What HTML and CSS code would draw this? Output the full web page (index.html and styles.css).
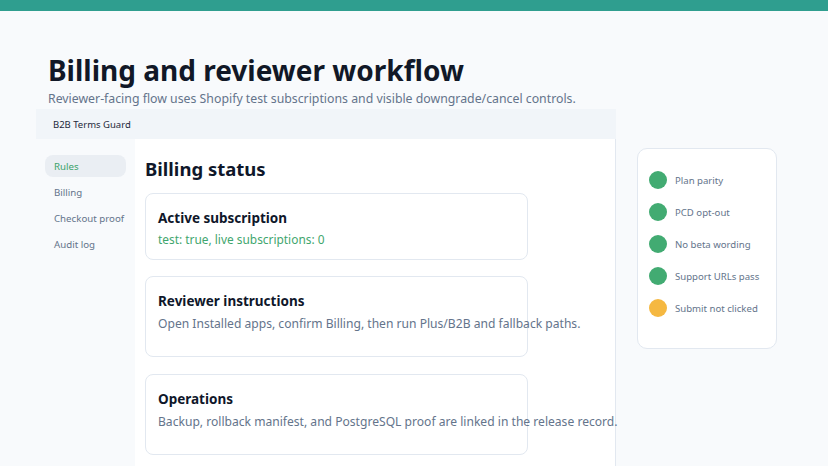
FILE: index.html
```html
<!DOCTYPE html>
<html lang="en">
<head>
    <meta charset="UTF-8">
    <meta name="viewport" content="width=device-width, initial-scale=1.0">
    <title>Billing and reviewer workflow</title>
    <link rel="stylesheet" href="styles.css">
</head>
<body>
    <div class="topbar"></div>

    <header class="intro">
        <h1>Billing and reviewer workflow</h1>
        <p>Reviewer-facing flow uses Shopify test subscriptions and visible downgrade/cancel controls.</p>
    </header>

    <div class="layout">
        <div class="app">
            <div class="app-header">B2B Terms Guard</div>
            <div class="app-body">
                <nav class="sidebar">
                    <a class="nav-item active">Rules</a>
                    <a class="nav-item">Billing</a>
                    <a class="nav-item">Checkout proof</a>
                    <a class="nav-item">Audit log</a>
                </nav>
                <main class="main">
                    <h2>Billing status</h2>
                    <div class="card">
                        <h3>Active subscription</h3>
                        <p class="ok">test: true, live subscriptions: 0</p>
                    </div>
                    <div class="card tall">
                        <h3>Reviewer instructions</h3>
                        <p>Open Installed apps, confirm Billing, then run Plus/B2B and fallback paths.</p>
                    </div>
                    <div class="card tall">
                        <h3>Operations</h3>
                        <p>Backup, rollback manifest, and PostgreSQL proof are linked in the release record.</p>
                    </div>
                </main>
            </div>
        </div>

        <aside class="checks">
            <div class="check"><span class="dot pass"></span>Plan parity</div>
            <div class="check"><span class="dot pass"></span>PCD opt-out</div>
            <div class="check"><span class="dot pass"></span>No beta wording</div>
            <div class="check"><span class="dot pass"></span>Support URLs pass</div>
            <div class="check"><span class="dot warn"></span>Submit not clicked</div>
        </aside>
    </div>
</body>
</html>
```

FILE: styles.css
```css
body { margin: 0; font-family: "Noto Sans", "Open Sans", sans-serif; background-color: #f8fafc; color: #0f172a; }
.topbar { height: 11px; background-color: #2f9e8f; }

.intro { padding: 42px 48px 0; }
.intro h1 { margin: 0; font-size: 28px; line-height: 34px; font-weight: 700; color: #111827; }
.intro p { margin: 2px 0 0; font-size: 12.3px; line-height: 20px; color: #64748b; }

.layout { display: flex; align-items: flex-start; gap: 21px; padding-left: 36px; }

.app { width: 580px; }
.app-header { height: 30px; line-height: 31px; padding-left: 17px; font-size: 9.5px; background-color: #f1f5f9; color: #1e293b; }
.app-body { display: flex; }

.sidebar { width: 81px; padding: 16px 9px; display: flex; flex-direction: column; gap: 4px; background-color: #f8fafc; }
.nav-item { display: block; height: 22px; line-height: 23px; padding-left: 9px; border-radius: 8px; font-size: 9.7px; color: #64748b; white-space: nowrap; }
.nav-item.active { background-color: #eaeef3; color: #3aa26a; }

.main { flex: 1; min-height: 311px; padding: 16px 0 0 10px; background: white; border-right: 1px solid #e2e8f0; }
.main h2 { margin: 0 0 10px; font-size: 18.5px; line-height: 28px; font-weight: 700; }

.card { width: 357px; margin-bottom: 16px; padding: 14px 12px 10px; background: white; border: 1px solid #e2e8f0; border-radius: 8px; }
.card.tall { padding-bottom: 22px; margin-bottom: 17px; }
.card h3 { margin: 0; font-size: 13.5px; line-height: 20px; font-weight: 700; }
.card p { margin: 1px 0 0; font-size: 12.1px; line-height: 20px; color: #64748b; white-space: nowrap; }
.card.tall p { margin-top: 3px; }
.card p.ok { font-size: 11.9px; color: #3fa66e; }

.checks { margin-top: 39px; width: 116px; padding: 22px 11px 31px; background: white; border: 1px solid #e2e8f0; border-radius: 10px; display: flex; flex-direction: column; gap: 14px; }
.check { display: flex; align-items: center; gap: 8px; height: 18px; font-size: 9.6px; color: #64748b; white-space: nowrap; }
.dot { width: 18px; height: 18px; border-radius: 50%; flex-shrink: 0; }
.dot.pass { background-color: #42ab72; }
.dot.warn { background-color: #f5b841; }
```
